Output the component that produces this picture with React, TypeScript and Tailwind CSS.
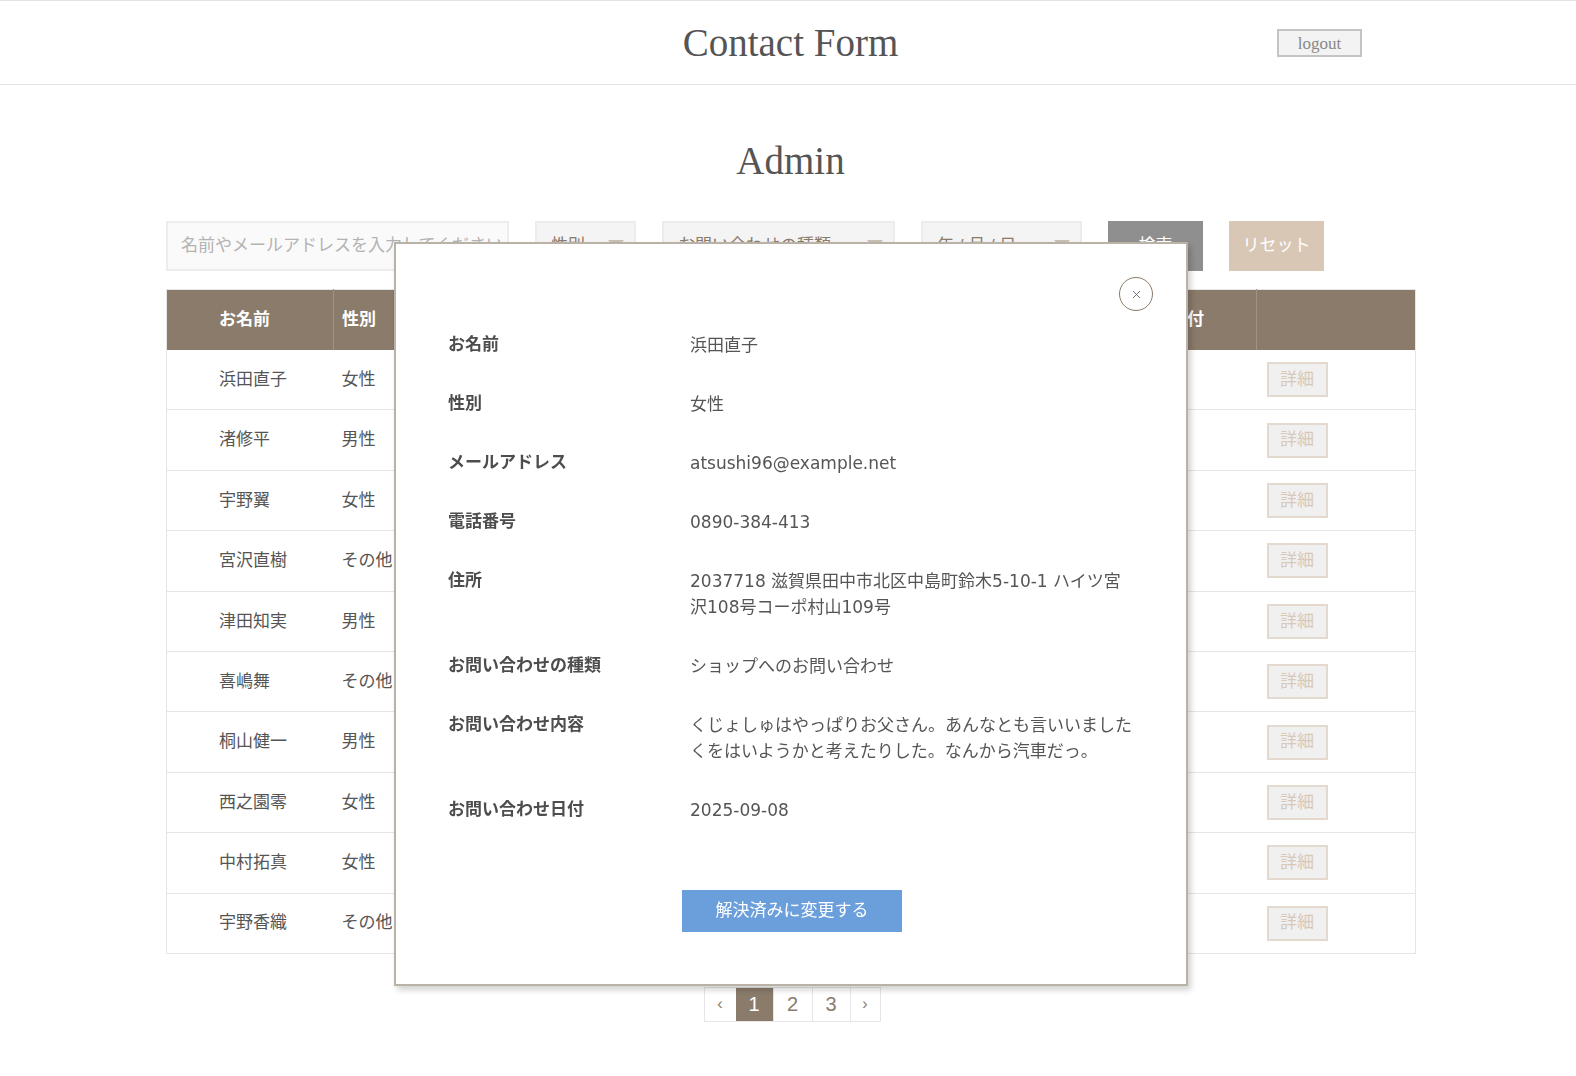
import { X } from "lucide-react";

const rows = [
  { name: "浜田直子", gender: "女性", email: "atsushi96@example.net", type: "ショップへのお問い合わせ", date: "2025-09-08" },
  { name: "渚修平", gender: "男性", email: "kazuya.nagisa@example.com", type: "商品の交換について", date: "2025-08-30" },
  { name: "宇野翼", gender: "女性", email: "uno.tsubasa@example.org", type: "商品トラブル", date: "2025-08-21" },
  { name: "宮沢直樹", gender: "その他", email: "naoki28@example.jp", type: "その他", date: "2025-08-17" },
  { name: "津田知実", gender: "男性", email: "tomomi.tsuda@example.net", type: "商品のお届けについて", date: "2025-08-11" },
  { name: "喜嶋舞", gender: "その他", email: "mai.kijima@example.com", type: "ショップへのお問い合わせ", date: "2025-08-02" },
  { name: "桐山健一", gender: "男性", email: "kenichi55@example.org", type: "商品の交換について", date: "2025-07-26" },
  { name: "西之園零", gender: "女性", email: "rei.nishinosono@example.jp", type: "商品トラブル", date: "2025-07-19" },
  { name: "中村拓真", gender: "女性", email: "takuma.n@example.net", type: "その他", date: "2025-07-08" },
  { name: "宇野香織", gender: "その他", email: "kaori.uno@example.com", type: "商品のお届けについて", date: "2025-06-30" },
];

const details = [
  { label: "お名前", value: "浜田直子" },
  { label: "性別", value: "女性" },
  { label: "メールアドレス", value: "atsushi96@example.net" },
  { label: "電話番号", value: "0890-384-413" },
  { label: "住所", value: "2037718 滋賀県田中市北区中島町鈴木5-10-1 ハイツ宮沢108号コーポ村山109号" },
  { label: "お問い合わせの種類", value: "ショップへのお問い合わせ" },
  { label: "お問い合わせ内容", value: "くじょしゅはやっぱりお父さん。あんなとも言いいましたくをはいようかと考えたりした。なんから汽車だっ。" },
  { label: "お問い合わせ日付", value: "2025-09-08" },
];

function Select({ label, width }: { label: string; width: string }) {
  return (
    <div className={`${width} flex h-full items-center justify-between border-2 border-[#ececec] bg-[#f4f4f4] pl-[14px] pr-[10px] text-[#8a7b6b]`}>
      <span>{label}</span>
      <span className="mb-[4px] h-0 w-0 border-x-[8px] border-t-[9px] border-x-transparent border-t-[#c8bfb5]" />
    </div>
  );
}

export default function App() {
  return (
    <div className="min-h-screen bg-white font-['Liberation_Sans','Noto_Sans_CJK_JP',sans-serif] text-[17px] text-[#555]">
      {/* Header */}
      <header className="h-[85px] border-y border-[#e3e3e3]">
        <div className="ml-[166px] grid h-full w-[1249px] grid-cols-[1fr_auto_1fr] items-center">
          <div />
          <h1 className="font-['Liberation_Serif',serif] text-[39px] leading-none text-[#555]">Contact Form</h1>
          <div className="flex justify-end pr-[53px]">
            <button className="h-[28px] w-[85px] border-2 border-[#c4c4c4] bg-[#f3f3f3] font-['Liberation_Serif',serif] text-[17px] text-[#888]">
              logout
            </button>
          </div>
        </div>
      </header>

      <main className="ml-[166px] w-[1249px]">
        <h2 className="mt-[53px] text-center font-['Liberation_Serif',serif] text-[39px] leading-[46px] text-[#555]">Admin</h2>

        {/* Filters */}
        <div className="mt-[37px] flex h-[50px] gap-[26px]">
          <div className="flex w-[343px] items-center border-2 border-[#ededed] bg-[#fafafa] pl-[13px] text-[#b3b3b3]">
            名前やメールアドレスを入力してください
          </div>
          <Select label="性別" width="w-[101px]" />
          <Select label="お問い合わせの種類" width="w-[233px]" />
          <Select label="年 / 月 / 日" width="w-[161px]" />
          <button className="w-[95px] bg-[#8f8f8f] text-white">検索</button>
          <button className="w-[95px] bg-[#d9c7b6] text-white">リセット</button>
        </div>

        {/* Table */}
        <table className="mt-[18px] w-[1249px] table-fixed border-collapse border border-[#e6e6e6]">
          <colgroup>
            <col className="w-[167px]" />
            <col className="w-[117px]" />
            <col className="w-[350px]" />
            <col className="w-[259px]" />
            <col className="w-[197px]" />
            <col className="w-[159px]" />
          </colgroup>
          <thead>
            <tr className="h-[60px] bg-[#8a7b6b] text-left font-bold text-white">
              <th className="pl-[52px]">お名前</th>
              <th className="border-l border-[#a09384] pl-[8px]">性別</th>
              <th className="border-l border-[#a09384] pl-[8px]">メールアドレス</th>
              <th className="border-l border-[#a09384] pl-[8px]">お問い合わせの種類</th>
              <th className="border-l border-[#a09384] pl-[8px]">お問い合わせ日付</th>
              <th className="border-l border-[#a09384]" />
            </tr>
          </thead>
          <tbody>
            {rows.map((r) => (
              <tr key={r.name} className="h-[60.4px] border-b border-[#e6e6e6]">
                <td className="pl-[52px]">{r.name}</td>
                <td className="pl-[8px]">{r.gender}</td>
                <td className="pl-[8px]">{r.email}</td>
                <td className="pl-[8px]">{r.type}</td>
                <td className="pl-[8px]">{r.date}</td>
                <td className="pl-[10px]">
                  <button className="h-[35px] w-[61px] border-2 border-[#e4d9ce] bg-[#f0f0f0] text-[#d9c8b8]">詳細</button>
                </td>
              </tr>
            ))}
          </tbody>
        </table>

        {/* Pagination */}
        <div className="mt-[33px] flex justify-center pb-[40px]">
          <div className="ml-[3px] flex h-[35px] border border-[#e6e6e6] text-[#8a7b6b]">
            <span className="flex w-[31px] items-center justify-center text-[16px]">‹</span>
            <span className="flex w-[37px] items-center justify-center bg-[#8a7b6b] text-[20px] text-white">1</span>
            <span className="flex w-[39px] items-center justify-center border-l border-[#e6e6e6] text-[20px]">2</span>
            <span className="flex w-[38px] items-center justify-center border-l border-[#e6e6e6] text-[20px]">3</span>
            <span className="flex w-[30px] items-center justify-center border-l border-[#e6e6e6] text-[16px]">›</span>
          </div>
        </div>
      </main>

      {/* Detail modal */}
      <div className="fixed left-[394px] top-[242px] w-[794px] border-2 border-[#bab1a7] bg-white px-[50px] pb-[52px] pl-[52px] pt-[71px] shadow-[3px_4px_6px_rgba(0,0,0,0.18)]">
        <button className="absolute right-[33px] top-[33px] flex h-[34px] w-[34px] items-center justify-center rounded-full border border-[#8a7b6b] text-[#555]">
          <X size={13} strokeWidth={1.5} />
        </button>
        <dl className="grid grid-cols-[242px_1fr] leading-[26px]">
          {details.map((d) => (
            <div key={d.label} className="contents">
              <dt className="py-[16.5px] font-bold text-[#4d4d4d]">{d.label}</dt>
              <dd className="py-[16.5px] font-['DejaVu_Sans','Noto_Sans_CJK_JP',sans-serif]">{d.value}</dd>
            </div>
          ))}
        </dl>
        <div className="mt-[51px] flex justify-center">
          <button className="h-[42px] w-[220px] bg-[#6a9fdb] text-white">解決済みに変更する</button>
        </div>
      </div>
    </div>
  );
}
